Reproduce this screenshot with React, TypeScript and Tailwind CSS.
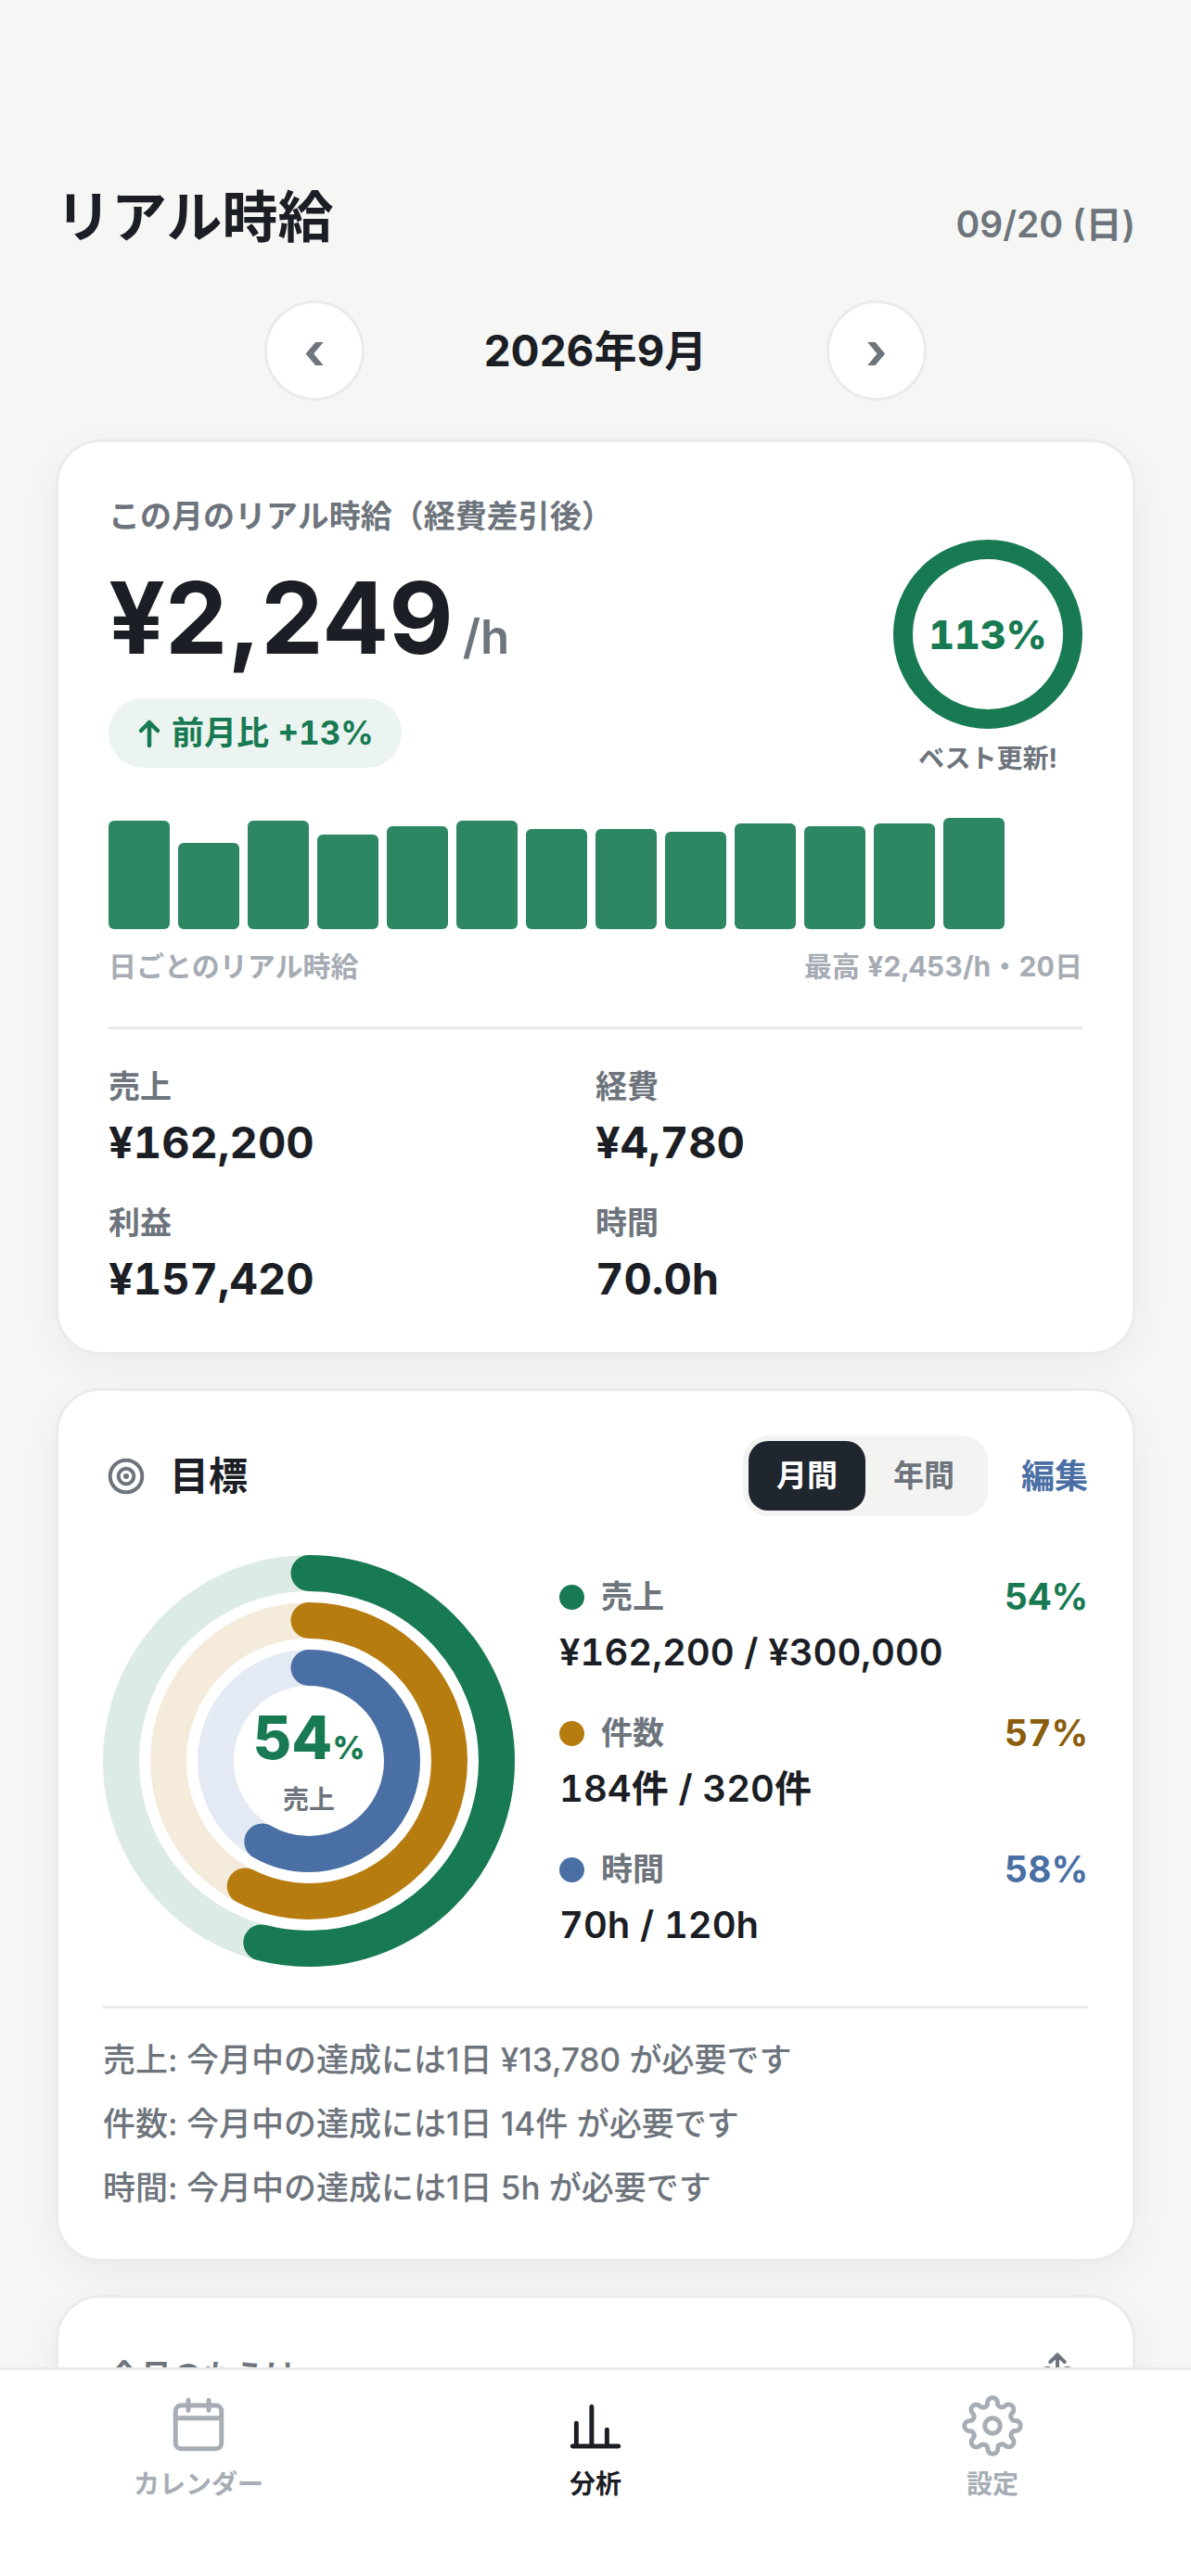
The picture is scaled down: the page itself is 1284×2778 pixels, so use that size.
import React, { useState } from "react";
import clsx from "clsx";

const dailyBars = [117, 93, 117, 102, 111, 117, 108, 108, 105, 114, 111, 114, 120];

const stats = [
  { label: "売上", value: "¥162,200" },
  { label: "経費", value: "¥4,780" },
  { label: "利益", value: "¥157,420" },
  { label: "時間", value: "70.0h" },
];

const goals = [
  {
    label: "売上",
    percent: "54%",
    value: "¥162,200 / ¥300,000",
    dot: "bg-[#187a52]",
    text: "text-[#187a52]",
  },
  {
    label: "件数",
    percent: "57%",
    value: "184件 / 320件",
    dot: "bg-[#b77c10]",
    text: "text-[#8a5c0c]",
  },
  {
    label: "時間",
    percent: "58%",
    value: "70h / 120h",
    dot: "bg-[#4a6fa5]",
    text: "text-[#4a6fa5]",
  },
];

const rings = [
  { radius: 202.5, ratio: 0.5407, color: "#187a52", track: "#dcebe5" },
  { radius: 151.5, ratio: 0.575, color: "#b77c10", track: "#f4ebdb" },
  { radius: 100.5, ratio: 0.5833, color: "#4a6fa5", track: "#e4eaf3" },
];

const notes = [
  "売上: 今月中の達成には1日 ¥13,780 が必要です",
  "件数: 今月中の達成には1日 14件 が必要です",
  "時間: 今月中の達成には1日 5h が必要です",
];

type CardProps = {
  className?: string;
  children: React.ReactNode;
};

const Card = ({ className, children }: CardProps) => (
  <section
    className={clsx(
      "rounded-[48px] border-[3px] border-[#ebebea] bg-white shadow-[0_12px_42px_rgba(20,24,30,0.05)]",
      className
    )}
  >
    {children}
  </section>
);

const Header = () => (
  <header className="flex h-[72px] items-baseline justify-between">
    <h1 className="text-[60px] leading-[72px] font-bold">リアル時給</h1>
    <p className="text-[39px] leading-[48px] font-semibold text-[#6d747c]">
      09/20 (日)
    </p>
  </header>
);

const MonthNav = () => {
  const button =
    "flex size-[108px] items-center justify-center rounded-full border-[3px] border-[#ebebea] bg-white text-[54px] font-bold text-[#6d747c]";

  return (
    <div className="mt-[54px] flex items-center justify-center gap-[54px]">
      <button type="button" aria-label="前の月" className={button}>
        ‹
      </button>
      <h2 className="w-[390px] text-center text-[46px] leading-[60px] font-bold">
        2026年9月
      </h2>
      <button type="button" aria-label="次の月" className={button}>
        ›
      </button>
    </div>
  );
};

const WageCard = () => (
  <Card className="mt-[42px] px-[54px] pt-[54px] pb-[51px]">
    <h3 className="text-[34px] leading-[51px] font-bold text-[#6d747c]">
      この月のリアル時給（経費差引後）
    </h3>
    <div className="flex justify-between">
      <div className="pt-6">
        <p className="flex h-[120px] items-baseline gap-2.5 leading-[120px]">
          <span className="text-[107px] font-bold">¥2,249</span>
          <span className="text-[51px] font-semibold text-[#6d747c]">/h</span>
        </p>
        <p className="mt-[27px] flex h-[75px] w-fit items-center gap-2.5 rounded-full bg-[#ebf4f0] px-[30px] text-[35px] font-bold text-[#187a52]">
          <svg
            viewBox="0 0 28 34"
            className="h-[34px] w-7"
            fill="none"
            stroke="currentColor"
            strokeWidth="4.5"
            strokeLinecap="round"
            strokeLinejoin="round"
          >
            <path d="M14 30V5M5 14l9-9 9 9" />
          </svg>
          <span className="tabular-nums">前月比 +13%</span>
        </p>
      </div>
      <div className="flex flex-col items-center">
        <div className="flex size-[204px] items-center justify-center rounded-full border-[21px] border-[#187a52] text-[43px] font-extrabold tabular-nums text-[#187a52]">
          113%
        </div>
        <p className="mt-4 text-[28px] leading-8 font-bold text-[#6d747c]">
          ベスト更新!
        </p>
      </div>
    </div>

    <div className="mt-12 flex h-[120px] items-end gap-[9px]">
      {dailyBars.map((height, i) => (
        <div
          key={i}
          className="w-[66px] rounded-md bg-[#2e8763]"
          style={{ height }}
        />
      ))}
    </div>
    <div className="mt-5 flex justify-between text-[30px] leading-10 font-bold tabular-nums text-[#a6acb4]">
      <span>日ごとのリアル時給</span>
      <span>最高 ¥2,453/h・20日</span>
    </div>

    <dl className="mt-[45px] grid grid-cols-2 gap-y-[39px] border-t-[3px] border-[#ebebea] pt-[42px]">
      {stats.map((stat) => (
        <div key={stat.label}>
          <dt className="text-[34px] leading-10 font-bold text-[#6d747c]">
            {stat.label}
          </dt>
          <dd className="mt-3 text-[47px] leading-[56px] font-bold tabular-nums">
            {stat.value}
          </dd>
        </div>
      ))}
    </dl>
  </Card>
);

const GoalRings = () => (
  <div className="relative size-[444px] shrink-0">
    <svg viewBox="0 0 444 444" className="size-full" fill="none" strokeWidth="39">
      {rings.map(({ radius, ratio, color, track }) => (
        <g key={color} transform="rotate(-90 222 222)">
          <circle cx="222" cy="222" r={radius} stroke={track} />
          <circle
            cx="222"
            cy="222"
            r={radius}
            stroke={color}
            strokeLinecap="round"
            pathLength="1"
            strokeDasharray={`${ratio} 1`}
          />
        </g>
      ))}
    </svg>
    <div className="absolute inset-0 flex flex-col items-center justify-center">
      <p className="flex items-baseline leading-[72px] font-extrabold text-[#187a52]">
        <span className="text-[64px]">54</span>
        <span className="text-[34px]">%</span>
      </p>
      <p className="text-[28px] leading-10 font-bold text-[#6d747c]">売上</p>
    </div>
  </div>
);

const GoalCard = () => {
  const [period, setPeriod] = useState("月間");

  return (
    <Card className="mt-9 px-12 pt-12 pb-[42px]">
      <div className="flex items-center">
        <svg
          viewBox="0 0 50 50"
          className="size-[50px]"
          fill="none"
          stroke="#6d747c"
          strokeWidth="4"
        >
          <circle cx="25" cy="25" r="17.3" />
          <circle cx="25" cy="25" r="8.3" />
          <circle cx="25" cy="25" r="3" fill="#6d747c" stroke="none" />
        </svg>
        <h3 className="ml-[22px] text-[42px] leading-[60px] font-bold">目標</h3>
        <div className="ml-auto flex rounded-[27px] bg-[#f3f3f2] p-1.5">
          {["月間", "年間"].map((name) => (
            <button
              key={name}
              type="button"
              aria-pressed={period === name}
              onClick={() => setPeriod(name)}
              className={clsx(
                "h-[75px] rounded-[21px] px-[30px] text-[33px] font-bold",
                period === name ? "bg-[#20262e] text-white" : "text-[#6d747c]"
              )}
            >
              {name}
            </button>
          ))}
        </div>
        <button
          type="button"
          className="ml-9 text-[36px] font-bold text-[#4a6fa5]"
        >
          編集
        </button>
      </div>

      <div className="mt-[42px] flex items-center gap-12">
        <GoalRings />
        <ul className="flex flex-1 flex-col gap-[39px]">
          {goals.map((goal) => (
            <li key={goal.label}>
              <div className="flex items-center leading-[48px]">
                <span className={clsx("size-[27px] rounded-full", goal.dot)} />
                <span className="ml-[18px] text-[34px] font-bold text-[#6d747c]">
                  {goal.label}
                </span>
                <span
                  className={clsx(
                    "ml-auto text-[39px] font-bold tabular-nums",
                    goal.text
                  )}
                >
                  {goal.percent}
                </span>
              </div>
              <p className="mt-3 text-[40px] leading-[48px] font-semibold tabular-nums">
                {goal.value}
              </p>
            </li>
          ))}
        </ul>
      </div>

      <div className="mt-[42px] border-t-[3px] border-[#ebebea] pt-[21px] text-[35px] leading-[69px] font-medium text-[#6d747c]">
        {notes.map((note) => (
          <p key={note}>{note}</p>
        ))}
      </div>
    </Card>
  );
};

const ProfitCard = () => (
  <Card className="mt-9 p-[54px]">
    <div className="flex min-h-[60px] items-center justify-between text-[#6d747c]">
      <h3 className="text-[34px] leading-[51px] font-bold">今月のもうけ</h3>
      <button type="button" aria-label="共有">
        <svg
          viewBox="0 0 24 24"
          className="size-[54px]"
          fill="none"
          stroke="currentColor"
          strokeWidth="1.8"
          strokeLinecap="round"
          strokeLinejoin="round"
        >
          <path d="M12 14V2M8.6 5.4 12 2l3.4 3.4M8 8.5H6.8A1.5 1.5 0 0 0 5.3 10v9.5A1.5 1.5 0 0 0 6.8 21h10.4a1.5 1.5 0 0 0 1.5-1.5V10a1.5 1.5 0 0 0-1.5-1.5H16" />
        </svg>
      </button>
    </div>
  </Card>
);

const tabs = [
  {
    label: "カレンダー",
    icon: (
      <>
        <rect x="3" y="4" width="18" height="17" rx="2.2" />
        <path d="M3 9h18M8 2v4M16 2v4" />
      </>
    ),
  },
  {
    label: "分析",
    active: true,
    icon: <path d="M3 20h18M4.5 20v-9M10.5 20V4.5M16.5 20v-6.5" />,
  },
  {
    label: "設定",
    icon: (
      <>
        <circle cx="12" cy="12" r="3" />
        <path d="M19.4 15a1.65 1.65 0 0 0 .33 1.82l.06.06a2 2 0 0 1-2.83 2.83l-.06-.06a1.65 1.65 0 0 0-1.82-.33 1.65 1.65 0 0 0-1 1.51V21a2 2 0 0 1-4 0v-.09A1.65 1.65 0 0 0 9 19.4a1.65 1.65 0 0 0-1.82.33l-.06.06a2 2 0 0 1-2.83-2.83l.06-.06a1.65 1.65 0 0 0 .33-1.82 1.65 1.65 0 0 0-1.51-1H3a2 2 0 0 1 0-4h.09A1.65 1.65 0 0 0 4.6 9a1.65 1.65 0 0 0-.33-1.82l-.06-.06a2 2 0 0 1 2.83-2.83l.06.06a1.65 1.65 0 0 0 1.82.33H9a1.65 1.65 0 0 0 1-1.51V3a2 2 0 0 1 4 0v.09a1.65 1.65 0 0 0 1 1.51 1.65 1.65 0 0 0 1.82-.33l.06-.06a2 2 0 0 1 2.83 2.83l-.06.06a1.65 1.65 0 0 0-.33 1.82V9a1.65 1.65 0 0 0 1.51 1H21a2 2 0 0 1 0 4h-.09a1.65 1.65 0 0 0-1.51 1z" />
      </>
    ),
  },
];

const TabBar = () => (
  <nav className="grid h-[225px] shrink-0 grid-cols-3 border-t-[3px] border-[#ebebea] bg-white">
    {tabs.map((tab) => (
      <a
        key={tab.label}
        href="#"
        aria-current={tab.active ? "page" : undefined}
        className={clsx(
          "flex flex-col items-center pt-[27px]",
          tab.active ? "text-[#1b1e24]" : "text-[#a6adb5]"
        )}
      >
        <svg
          viewBox="0 0 24 24"
          className="size-[66px]"
          fill="none"
          stroke="currentColor"
          strokeWidth="1.8"
          strokeLinecap="round"
          strokeLinejoin="round"
        >
          {tab.icon}
        </svg>
        <span className="mt-3 text-[28px] leading-9 font-bold">
          {tab.label}
        </span>
      </a>
    ))}
  </nav>
);

const App = () => (
  <div
    lang="ja"
    className="flex h-screen flex-col bg-[#f6f6f4] font-['Inter','Noto_Sans_CJK_JP',sans-serif] text-[#1b1e24]"
  >
    <main className="min-h-0 flex-1 overflow-y-auto px-[60px] pt-[198px] [scrollbar-width:none]">
      <Header />
      <MonthNav />
      <WageCard />
      <GoalCard />
      <ProfitCard />
    </main>
    <TabBar />
  </div>
);

export default App;
